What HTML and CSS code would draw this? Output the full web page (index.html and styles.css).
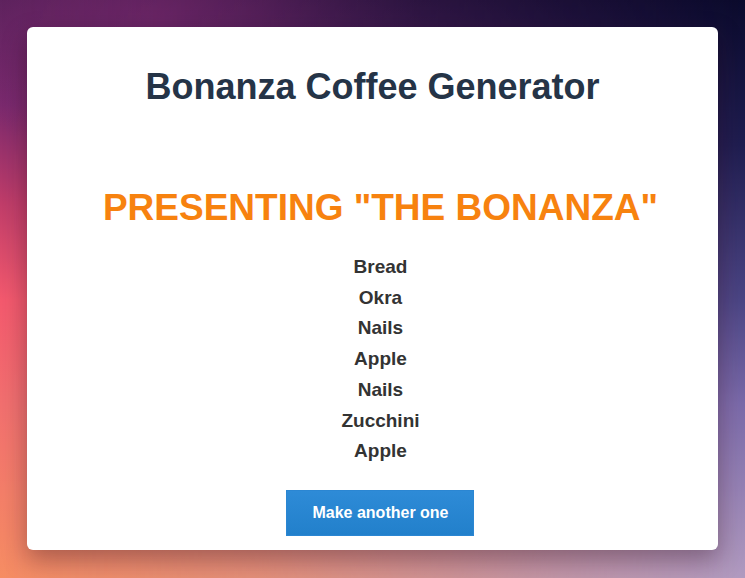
FILE: index.html
```html
<!DOCTYPE html>
<html>
<head>
<meta charset="utf-8">
<link rel="stylesheet" href="styles.css">
</head>
<body>
<div class="bg"></div>
<main class="card">
  <h1 class="title">Bonanza Coffee Generator</h1>
  <div class="result">
    <h2 class="presenting">PRESENTING "THE BONANZA"</h2>
    <ul class="items">
      <li>Bread</li>
      <li>Okra</li>
      <li>Nails</li>
      <li>Apple</li>
      <li>Nails</li>
      <li>Zucchini</li>
      <li>Apple</li>
    </ul>
    <div class="actions">
      <button class="btn">Make another one</button>
    </div>
  </div>
</main>
</body>
</html>
```
FILE: styles.css
```css
html, body {
  margin: 0;
  height: 100%;
}
body {
  font-family: "Liberation Sans", Arial, sans-serif;
  position: relative;
  overflow: hidden;
  padding: 27px 27px 0 27px;
  box-sizing: border-box;
  background:
    radial-gradient(ellipse 260px 140px at 160px 20px, rgba(125, 42, 112, 0.9), rgba(125, 42, 112, 0) 100%),
    linear-gradient(to bottom, #4f1f55 0%, #7a2a6e 18%, #c03d6a 35%, #f45a6e 52%, #f2706f 70%, #f68d63 100%);
}
.bg {
  position: absolute;
  inset: 0;
  background: linear-gradient(to bottom, #0a0a2c 0%, #1e1d50 25%, #4a4585 52%, #7a6aaa 70%, #b09ac0 100%);
  -webkit-mask-image: linear-gradient(to right, rgba(0,0,0,0) 0%, rgba(0,0,0,0.25) 35%, rgba(0,0,0,0.75) 75%, #000 100%);
  mask-image: linear-gradient(to right, rgba(0,0,0,0) 0%, rgba(0,0,0,0.25) 35%, rgba(0,0,0,0.75) 75%, #000 100%);
  z-index: 0;
}
.card {
  position: relative;
  z-index: 1;
  background: #fff;
  border-radius: 6px;
  height: 523px;
  width: 691px;
  box-sizing: border-box;
  box-shadow: 0 10px 25px rgba(40, 10, 20, 0.35);
  text-align: center;
  padding-top: 39px;
  display: flex;
  flex-direction: column;
  align-items: center;
}
.title {
  margin: 0;
  font-size: 36px;
  font-weight: 700;
  color: #253447;
  line-height: 42px;
}
.result {
  padding-left: 16px;
  display: flex;
  flex-direction: column;
  align-items: center;
}
.presenting {
  margin: 79px 0 0 0;
  font-size: 37px;
  font-weight: 700;
  color: #f7820f;
  line-height: 42px;
  white-space: nowrap;
}
.items {
  list-style: none;
  margin: 23px 0 0 0;
  padding: 0;
  color: #333;
  font-weight: 700;
  font-size: 19px;
  line-height: 30.7px;
}
.actions {
  margin-top: 23px;
}
.btn {
  display: block;
  width: 188px;
  height: 46px;
  border: 1px solid #2b86d2;
  background: linear-gradient(to bottom, #2e8bd7, #2280cb);
  color: #fff;
  font-family: "Liberation Sans", Arial, sans-serif;
  font-weight: 700;
  font-size: 16px;
  border-radius: 0;
  padding: 0;
}
```
